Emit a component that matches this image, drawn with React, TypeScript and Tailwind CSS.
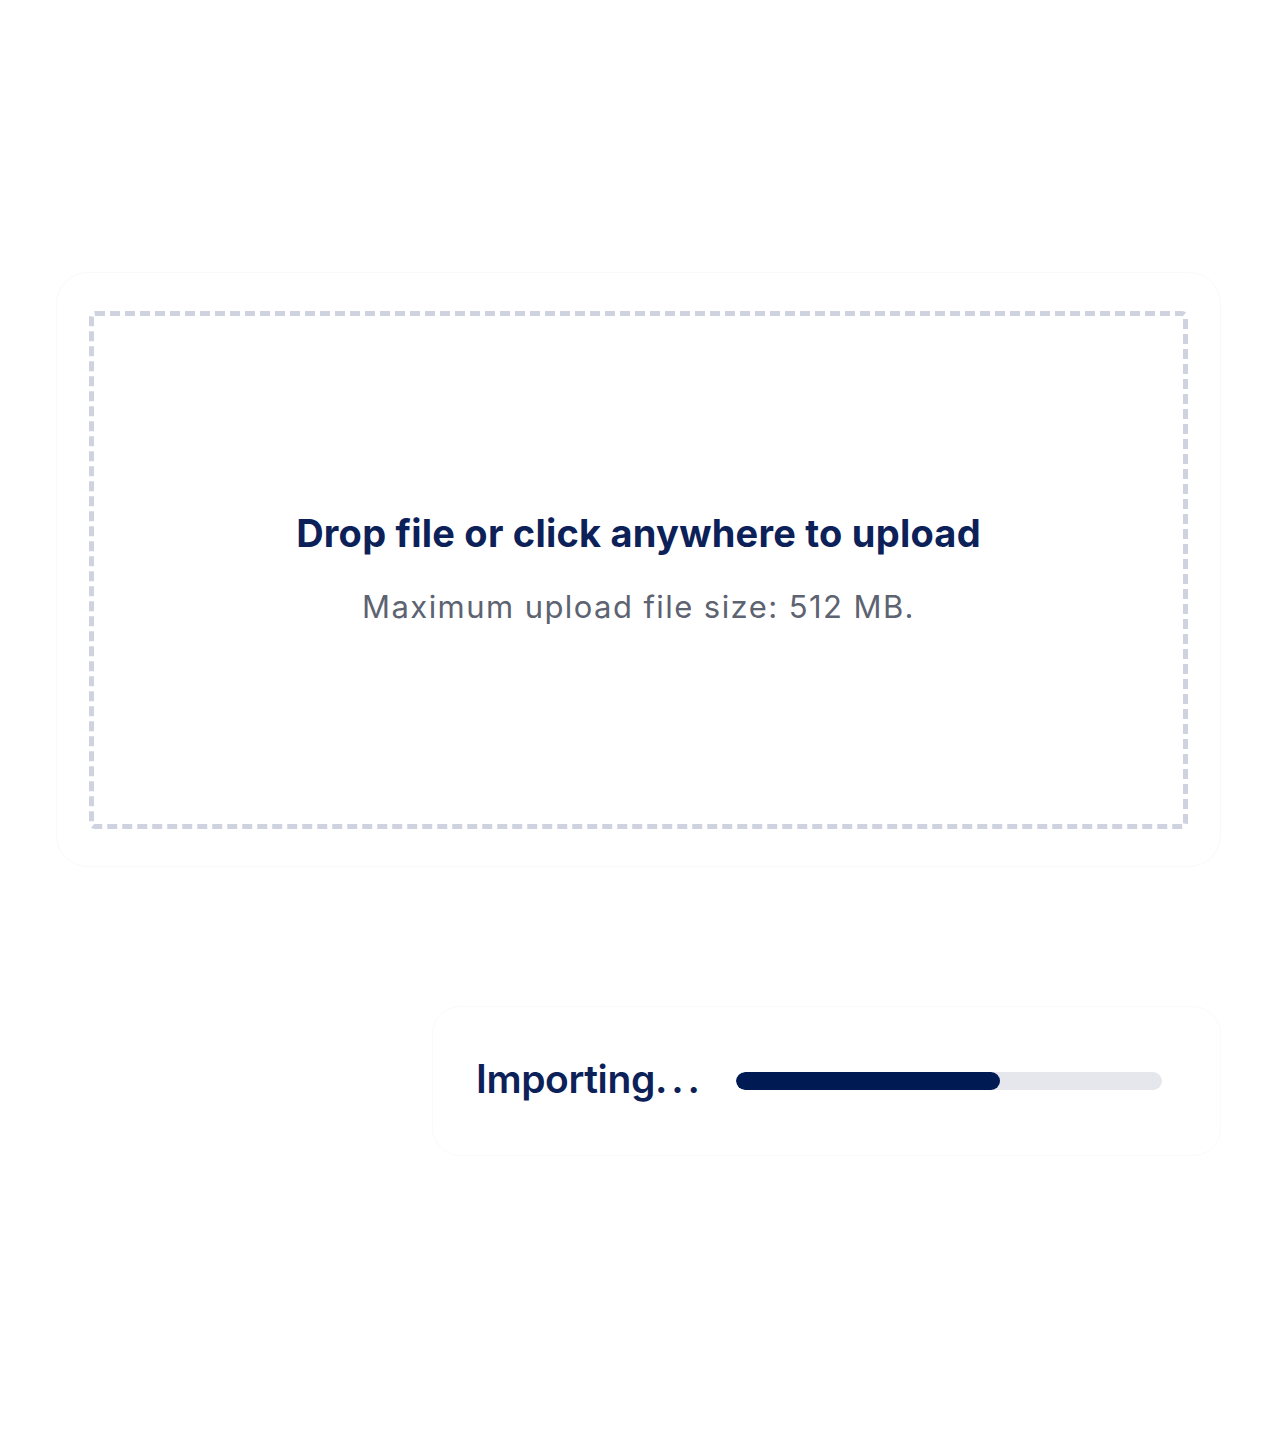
export default function App() {
  const progress = 62;
  return (
    <div className="min-h-[1440px] w-full bg-white pt-[272px]" style={{ fontFamily: "Inter, 'Noto Sans', sans-serif" }}>
      <div className="ml-[56px] w-[1165px]">
        {/* Upload drop zone */}
        <div className="rounded-[32px] border border-[#f9f9fa] bg-white px-[32px] pb-[37px] pt-[38px]">
          <div className="flex h-[518px] flex-col items-center justify-center rounded-[6px] border-[5px] border-dashed border-[#cfd3df]">
            <h2 className="mt-[-4px] text-[38px] font-bold leading-[44px] tracking-[0.006em] text-[#0d2159]">
              Drop file or click anywhere to upload
            </h2>
            <p className="mt-[34px] text-[31px] leading-[36px] tracking-[0.046em] text-[#5d6371]">
              Maximum upload file size: 512 MB.
            </p>
          </div>
        </div>

        {/* Import progress */}
        <div className="ml-auto mt-[139px] flex h-[150px] w-[789px] items-center rounded-[28px] border border-[#fafafb] bg-white pl-[43px] pr-[58px]">
          <span className="mt-[-6px] text-[39px] font-semibold leading-none tracking-[-0.01em] text-[#0d2159]">
            Importing<span className="tracking-[0.1em]">...</span>
          </span>
          <div className="ml-auto h-[18px] w-[426px] overflow-hidden rounded-full bg-[#e5e7ec]">
            <div className="h-full rounded-full bg-[#001b54]" style={{ width: `${progress}%` }} />
          </div>
        </div>
      </div>
    </div>
  );
}
